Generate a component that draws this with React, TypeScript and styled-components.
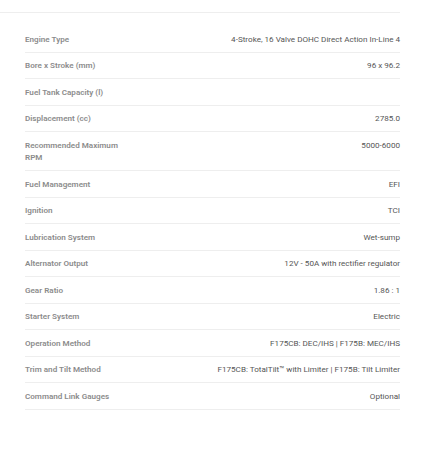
import React from 'react';
import styled, { createGlobalStyle } from 'styled-components';

const GlobalStyle = createGlobalStyle`
  html, body {
    margin: 0;
    padding: 0;
    background: #ffffff;
  }
  body {
    font-family: Roboto, "Liberation Sans", Arial, sans-serif;
  }
`;

const Page = styled.div`
  width: 400px;
  padding-top: 12px;
`;

const Divider = styled.div`
  border-top: 1px solid #eeeeee;
`;

const SpecTable = styled.div`
  margin: 13px 0 0 25px;
  display: flex;
  flex-direction: column;
`;

const SpecRow = styled.div`
  display: grid;
  grid-template-columns: 105px 1fr;
  align-items: start;
  padding: 6.5px 0;
  border-bottom: 1px solid #eeeeee;
  font-size: 8.1px;
  line-height: 12.5px;
`;

const Label = styled.div`
  color: #8c8c8c;
  font-weight: 600;
`;

const Value = styled.div`
  color: #555555;
  font-weight: 400;
  text-align: right;
`;

const specs: [string, string][] = [
  ['Engine Type', '4-Stroke, 16 Valve DOHC Direct Action In-Line 4'],
  ['Bore x Stroke (mm)', '96 x 96.2'],
  ['Fuel Tank Capacity (l)', ''],
  ['Displacement (cc)', '2785.0'],
  ['Recommended Maximum RPM', '5000-6000'],
  ['Fuel Management', 'EFI'],
  ['Ignition', 'TCI'],
  ['Lubrication System', 'Wet-sump'],
  ['Alternator Output', '12V - 50A with rectifier regulator'],
  ['Gear Ratio', '1.86 : 1'],
  ['Starter System', 'Electric'],
  ['Operation Method', 'F175CB: DEC/IHS | F175B: MEC/IHS'],
  ['Trim and Tilt Method', 'F175CB: TotalTilt™ with Limiter | F175B: Tilt Limiter'],
  ['Command Link Gauges', 'Optional'],
];

export default function App() {
  return (
    <>
      <GlobalStyle />
      <Page>
        <Divider />
        <SpecTable>
          {specs.map(([label, value]) => (
            <SpecRow key={label}>
              <Label>{label}</Label>
              <Value>{value}</Value>
            </SpecRow>
          ))}
        </SpecTable>
      </Page>
    </>
  );
}
